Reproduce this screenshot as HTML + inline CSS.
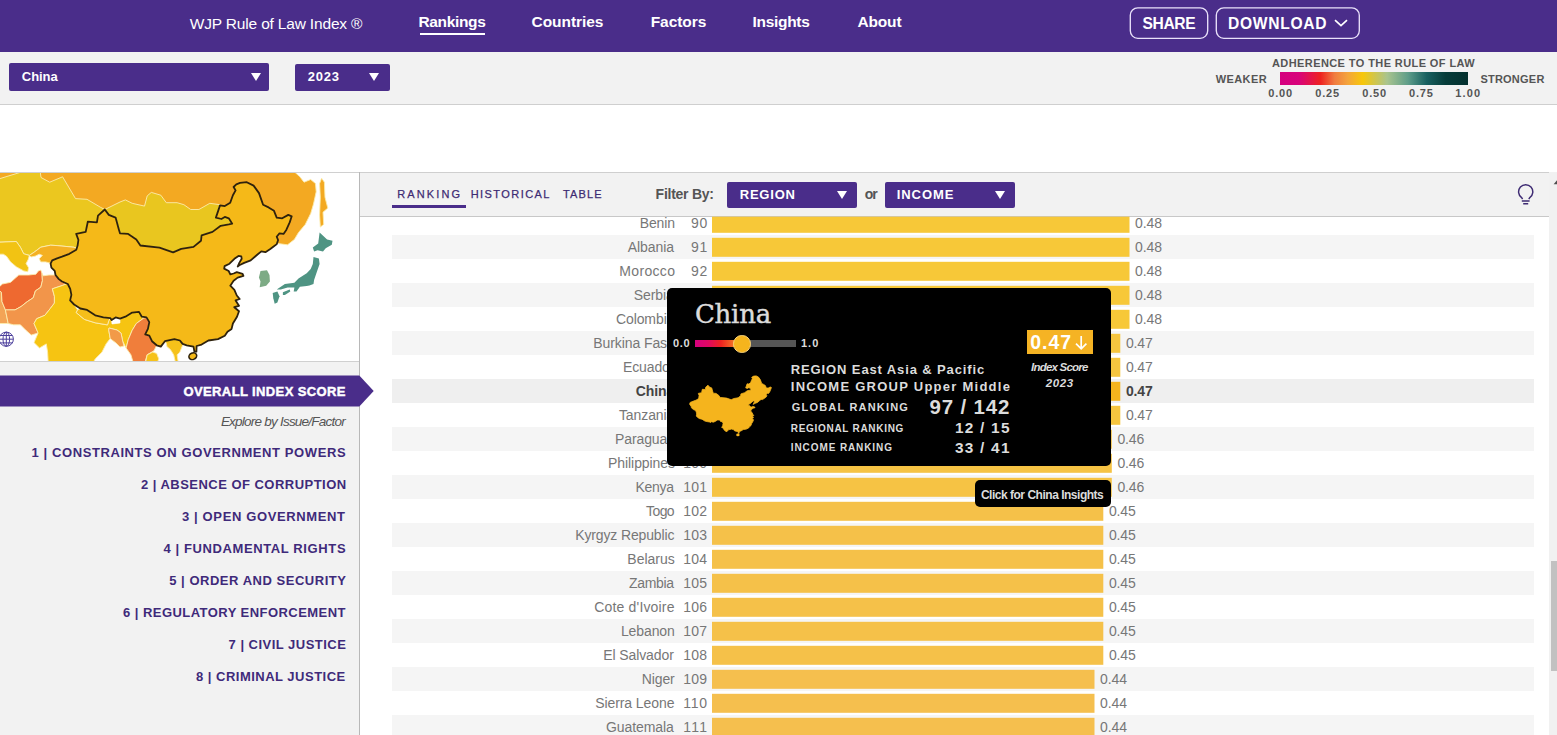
<!DOCTYPE html>
<html lang="en">
<head>
<meta charset="utf-8">
<title>WJP Rule of Law Index</title>
<style>
html,body{margin:0;padding:0;}
body{width:1557px;height:735px;position:relative;overflow:hidden;background:#fff;font-family:'Liberation Sans', sans-serif;}
.t{position:absolute;white-space:pre;line-height:1;}
.med{-webkit-text-stroke:0.25px currentColor;}
.black{-webkit-text-stroke:0.45px currentColor;}
.slab{-webkit-text-stroke:0.45px currentColor;}
.abs{position:absolute;}
#nav{left:0;top:0;width:1557px;height:52px;background:#4a2d8a;}
#sub{left:0;top:52px;width:1557px;height:52px;background:#f2f2f2;border-bottom:1px solid #cfcfcf;}
.btn{border:1px solid #e4dcf5;border-radius:7px;box-sizing:border-box;}
.sel{background:#4a2d8a;border-radius:2px;}
.tri{width:0;height:0;border-left:5.4px solid transparent;border-right:5.4px solid transparent;border-top:8.5px solid #fff;}
#leftpanel{left:0;top:172px;width:359px;height:563px;background:#f2f2f2;border-right:1px solid #b8b8b8;}
#mapbox{left:0;top:172px;width:359px;height:190px;background:#fff;border-top:1px solid #d0d0d0;border-bottom:1px solid #d0d0d0;box-sizing:border-box;}
.map{position:absolute;left:0;top:0px;}
#rhead{left:360px;top:172px;width:1190px;height:45px;background:#f2f2f2;border-top:1px solid #cfcfcf;border-bottom:1px solid #c8c8c8;box-sizing:border-box;}
.stripe{position:absolute;left:392px;width:1142px;height:24px;}
#tip{left:667px;top:287.5px;width:443.5px;height:178.5px;background:#000;border-radius:5px;}
#tip2{left:975px;top:480px;width:135.5px;height:27px;background:#000;border-radius:5px;}
</style>
</head>
<body>
<div id="nav" class="abs"></div>
<div class="abs" style="left:419.5px;top:33px;width:65.5px;height:2px;background:#fff"></div>
<svg class="abs" style="left:0;top:0" width="1557" height="52" viewBox="0 0 1557 52"><g fill="none" stroke="#e9e1fa" stroke-width="1.35"><rect x="1130.3" y="7.8" width="77.4" height="30.5" rx="7.5"/><rect x="1216.3" y="7.8" width="143" height="30.5" rx="7.5"/></g></svg>
<svg class="abs" style="left:1333px;top:17px" width="16" height="12" viewBox="0 0 16 12"><path d="M2 3.2 L8 8.6 L14 3.2" fill="none" stroke="#fff" stroke-width="1.7"/></svg>
<div id="sub" class="abs"></div>
<div class="abs sel" style="left:9px;top:63px;width:260px;height:28px"></div>
<div class="abs tri" style="left:250.8px;top:72.5px"></div>
<div class="abs sel" style="left:295px;top:64px;width:95px;height:27px"></div>
<div class="abs tri" style="left:368.7px;top:72.5px"></div>
<div class="abs" style="left:1280px;top:72px;width:188px;height:13px;background:linear-gradient(90deg,#d5007f 0%,#d8037b 10%,#ee2220 21.5%,#f07c40 29%,#f4a43c 36%,#f7c70a 44%,#a9c48e 57%,#5f9e8a 68%,#186060 78%,#063c3a 88%,#04302e 100%)"></div>

<div id="leftpanel" class="abs"></div>
<div id="mapbox" class="abs">
<svg class="map" width="359" height="188" viewBox="0 173 359 188">
<polygon points="-3.0,170.0 292.4,170.0 299.9,176.8 304.0,182.2 310.7,179.5 315.5,183.6 316.2,191.8 313.5,204.0 310.7,213.5 305.3,224.4 298.5,232.6 294.4,239.4 287.6,244.8 282.2,244.1 277.4,243.5 270.0,235.0 250.0,215.0 225.0,215.0 212.0,212.0 115.0,212.0 104.8,209.5 90.0,206.0 -3.0,200.0" fill="#f3a922" stroke="#fcecae" stroke-width="0.9" stroke-linejoin="round"/>
<polygon points="321.6,178.2 324.4,182.2 325.0,197.2 327.8,208.1 323.0,212.2 323.7,224.4 320.3,227.1 319.6,214.9 320.3,197.2 319.6,183.6" fill="#f3a922" stroke="#fcecae" stroke-width="0.9" stroke-linejoin="round"/>
<polygon points="-3.0,179.5 28.0,170.0 40.0,170.0 41.0,177.5 49.7,182.2 62.6,176.8 75.5,198.6 87.0,199.3 100.7,207.4 104.8,209.5 98.0,215.6 96.9,222.4 87.8,221.7 85.7,231.9 76.2,233.9 78.4,239.9 77.6,245.6 76.3,248.1 73.5,247.2 57.1,245.6 50.6,245.2 40.8,247.2 34.3,252.1 29.4,255.4 23.7,253.8 20.4,247.2 16.3,241.5 -3.0,242.3" fill="#ebc71f" stroke="#fcecae" stroke-width="0.9" stroke-linejoin="round"/>
<polygon points="104.8,209.5 120.0,202.0 125.4,199.9 132.2,203.3 144.5,206.1 147.2,195.9 151.3,192.4 160.8,195.2 166.3,202.7 177.1,202.7 183.9,204.7 190.7,209.5 198.9,209.5 209.8,203.3 220.0,204.7 215.9,217.6 221.4,219.0 224.8,216.9 228.8,218.3 232.2,223.7 228.8,224.4 220.7,225.8 212.5,231.9 201.6,235.3 201.0,240.7 193.5,246.9 181.2,248.9 173.1,252.3 159.5,247.6 140.4,245.5 136.3,239.4 128.2,233.9 120.0,233.3 119.0,229.9 115.6,217.6 108.8,214.9" fill="#e9c61f" stroke="#fcecae" stroke-width="0.9" stroke-linejoin="round"/>
<polygon points="29.4,255.4 34.3,252.1 40.8,247.2 50.6,245.2 57.1,245.6 73.5,247.2 76.3,248.1 76.3,249.7 69.4,253.8 62.0,256.6 57.1,258.3 52.2,260.3 50.2,263.2 45.7,261.9 40.8,261.9 39.2,258.7 42.4,255.4 39.2,254.2 35.1,256.2 31.0,257.0" fill="#f4b022" stroke="#fcecae" stroke-width="0.9" stroke-linejoin="round"/>
<polygon points="-3.0,242.3 16.3,241.5 20.4,247.2 23.7,253.8 29.4,255.4 28.2,259.5 26.1,263.6 28.6,267.7 27.8,271.7 23.7,270.9 16.3,266.8 10.6,261.9 6.5,256.2 3.3,254.2 -3.0,254.2" fill="#f2c313" stroke="#fcecae" stroke-width="0.9" stroke-linejoin="round"/>
<polygon points="-3.0,288.9 1.4,292.2 2.0,301.7 5.4,309.9 8.2,323.5 -3.0,323.5" fill="#f3a456" stroke="#fcecae" stroke-width="0.9" stroke-linejoin="round"/>
<polygon points="-3.0,288.9 2.4,284.0 10.6,282.3 18.8,275.0 28.6,275.0 35.9,274.2 38.4,270.9 40.8,270.1 42.0,273.4 42.4,280.7 40.8,287.2 35.4,290.9 33.3,297.7 27.2,301.7 21.1,306.5 15.0,309.9 5.4,309.9 2.0,301.7 1.4,292.2" fill="#ee6930" stroke="#fcecae" stroke-width="0.9" stroke-linejoin="round"/>
<polygon points="42.0,273.4 43.3,275.8 49.0,275.0 55.5,275.0 58.8,279.1 62.0,281.5 66.1,284.0 62.6,285.4 52.4,288.8 54.4,296.3 54.4,303.1 50.3,308.5 44.9,315.3 36.7,318.7 34.0,323.5 38.1,333.0 31.3,335.1 25.9,330.3 20.4,324.8 13.6,324.8 8.2,323.5 5.4,309.9 15.0,309.9 21.1,306.5 27.2,301.7 33.3,297.7 35.4,290.9 40.8,287.2 42.4,280.7" fill="#f2954a" stroke="#fcecae" stroke-width="0.9" stroke-linejoin="round"/>
<polygon points="52.4,288.8 62.6,285.4 66.1,284.0 67.8,284.0 70.2,288.9 71.4,294.9 70.1,300.4 74.1,304.5 77.6,309.9 76.2,312.6 84.4,319.4 95.2,322.8 107.5,324.9 108.8,320.8 110.2,318.1 111.6,320.1 112.0,324.0 120.0,323.0 120.0,318.7 125.4,316.7 132.2,312.6 139.0,311.9 141.8,316.7 143.8,318.1 136.3,323.5 132.2,330.3 128.2,339.8 126.1,348.0 122.7,341.2 121.0,333.0 117.0,330.0 109.0,328.0 108.8,330.3 110.2,338.5 106.1,343.9 102.0,352.1 95.2,358.9 92.5,364.0 48.3,364.0 47.6,352.1 46.3,343.9 39.5,348.0 34.0,342.6 38.1,333.0 34.0,323.5 36.7,318.7 44.9,315.3 50.3,308.5 54.4,303.1 54.4,296.3" fill="#f6c412" stroke="#fcecae" stroke-width="0.9" stroke-linejoin="round"/>
<polygon points="77.6,309.9 80.3,308.5 87.1,309.9 95.2,315.3 103.4,317.4 110.2,318.1 108.8,320.8 107.5,324.9 95.2,322.8 84.4,319.4 76.2,312.6" fill="#f5be1a" stroke="#fcecae" stroke-width="0.9" stroke-linejoin="round"/>
<polygon points="111.6,320.1 115.6,317.4 120.0,318.7 120.0,323.0 112.0,324.0" fill="#ffffff" stroke="none" stroke-width="0.9" stroke-linejoin="round"/>
<polygon points="109.0,328.0 117.0,330.0 121.0,333.0 122.7,341.2 124.0,346.0 120.0,347.0 116.0,343.0 112.0,340.0 110.2,338.5 108.8,330.3" fill="#f29a48" stroke="#fcecae" stroke-width="0.9" stroke-linejoin="round"/>
<polygon points="136.3,323.5 143.8,318.1 146.5,317.4 149.3,322.1 147.9,328.9 145.2,334.4 149.3,335.7 152.0,341.2 156.7,345.3 154.0,350.7 147.2,354.8 144.5,364.0 133.6,364.0 130.9,354.8 126.1,348.0 128.2,339.8 132.2,330.3" fill="#f07e3b" stroke="#fcecae" stroke-width="0.9" stroke-linejoin="round"/>
<polygon points="147.2,354.8 152.7,352.1 156.7,353.4 158.8,358.9 156.7,364.0 145.2,364.0" fill="#f6c21a" stroke="#fcecae" stroke-width="0.9" stroke-linejoin="round"/>
<polygon points="166.3,343.2 164.9,341.2 174.4,339.1 179.9,340.5 182.6,343.9 182.6,345.3 179.9,352.1 177.1,354.8 178.5,364.0 175.8,364.0 173.7,354.8 170.3,349.4 166.9,346.6" fill="#f6c21a" stroke="#fcecae" stroke-width="0.9" stroke-linejoin="round"/>
<polygon points="260.5,271.0 267.0,270.2 269.5,275.1 269.9,281.6 266.2,285.7 259.7,287.3 260.5,281.6 258.9,277.6" fill="#7dab85" stroke="none" stroke-width="0.9" stroke-linejoin="round"/>
<polygon points="319.6,232.6 327.1,239.4 332.5,240.7 331.8,244.8 325.7,248.2 323.0,251.6 317.6,250.3 314.1,251.6 312.8,247.6 318.2,243.5 318.9,238.0" fill="#4f9483" stroke="none" stroke-width="0.9" stroke-linejoin="round"/>
<polygon points="313.5,257.0 318.9,258.4 319.6,263.9 316.9,271.8 314.1,280.0 313.5,284.0 309.4,285.4 306.7,286.1 299.9,286.8 296.5,291.5 293.7,291.5 294.4,287.4 287.6,287.4 280.8,289.5 276.7,289.5 284.9,284.0 294.4,282.7 298.5,278.6 306.7,273.2 310.7,269.1 312.8,263.9" fill="#4f9483" stroke="none" stroke-width="0.9" stroke-linejoin="round"/>
<polygon points="282.9,292.2 289.7,289.5 290.3,291.5 284.9,294.9 282.9,294.9" fill="#4f9483" stroke="none" stroke-width="0.9" stroke-linejoin="round"/>
<polygon points="272.7,292.9 277.4,291.5 279.5,296.3 277.4,302.4 274.7,303.8 273.3,298.3" fill="#4f9483" stroke="none" stroke-width="0.9" stroke-linejoin="round"/>
<polygon points="104.8,209.5 108.8,214.9 115.6,217.6 119.0,229.9 120.0,233.3 128.2,233.9 136.3,239.4 140.4,245.5 159.5,247.6 173.1,252.3 181.2,248.9 193.5,246.9 201.0,240.7 201.6,235.3 212.5,231.9 220.7,225.8 228.8,224.4 232.2,223.7 228.8,218.3 224.8,216.9 221.4,219.0 215.9,217.6 220.0,205.4 224.8,206.1 230.2,202.7 232.9,195.2 235.6,190.4 233.6,187.0 236.3,184.3 240.0,182.9 246.8,182.2 253.6,185.6 259.0,193.1 263.1,204.7 268.6,207.4 274.0,210.8 276.7,217.6 282.2,218.3 288.3,214.9 291.7,216.3 289.7,222.4 286.3,229.9 283.5,233.9 279.5,233.3 276.7,236.7 278.1,240.0 276.8,244.1 273.6,246.5 270.3,249.0 265.4,252.2 261.3,251.4 257.2,254.7 250.7,260.4 244.2,262.9 239.3,265.3 237.7,266.5 239.3,262.9 241.7,258.8 241.3,256.3 238.5,255.9 234.4,258.8 229.5,263.7 224.6,266.1 224.2,268.6 228.7,271.0 230.3,274.3 233.6,273.5 236.8,272.2 242.6,273.9 243.4,275.9 237.7,277.6 233.6,280.8 230.3,285.7 234.4,289.8 236.8,295.5 239.7,299.0 235.6,300.4 239.0,305.8 234.3,307.2 239.0,311.3 237.0,316.7 232.9,323.5 231.6,328.9 227.5,331.7 224.8,335.7 218.0,339.1 208.4,340.5 201.6,344.6 196.6,346.0 196.4,351.6 194.4,351.6 193.5,346.6 186.7,345.3 182.6,343.9 179.9,340.5 174.4,339.1 164.9,341.2 160.8,346.6 156.7,345.3 152.0,341.2 149.3,335.7 145.2,334.4 147.9,328.9 149.3,322.1 146.5,317.4 141.8,316.7 139.0,311.9 132.2,312.6 125.4,316.7 120.0,318.7 115.6,317.4 111.6,320.1 110.2,318.1 103.4,317.4 95.2,315.3 87.1,309.9 80.3,308.5 74.1,304.5 70.1,300.4 71.4,294.9 70.2,288.9 67.8,284.0 62.0,281.5 58.8,279.1 55.5,275.0 54.7,270.9 51.4,267.7 50.6,263.6 52.2,260.3 57.1,258.3 62.0,256.6 69.4,253.8 76.3,249.7 77.6,245.6 78.4,239.9 76.2,233.9 85.7,231.9 87.8,221.7 96.9,222.4 98.0,215.6" fill="#f5b918" stroke="#2e220d" stroke-width="1.8" stroke-linejoin="round"/>
<ellipse cx="192.8" cy="356.2" rx="4" ry="3.2" fill="#f5b918" stroke="#2e220d" stroke-width="1.6" transform="rotate(-25 192.8 356.2)"/>
<g fill="none" stroke="#4c3f9c" stroke-width="1.0"><circle cx="6.3" cy="339.2" r="7.1" fill="#fff"/><ellipse cx="6.3" cy="339.2" rx="3.3" ry="7.1"/><path d="M6.3 332.1V346.3M-0.8 339.2H13.4M0.3 335.5H12.3M0.3 342.9H12.3"/></g>
</svg>
</div>
<svg class="abs" style="left:0;top:0" width="400" height="420" viewBox="0 0 400 420"><polygon points="-1,375.4 359.3,375.4 373.7,391 359.3,406.6 -1,406.6" fill="#4a2d8a"/></svg>

<div id="rhead" class="abs"></div>
<div class="abs" style="left:392px;top:205px;width:74px;height:3px;background:#4a2d8a"></div>
<div class="abs sel" style="left:727px;top:182px;width:130px;height:26px"></div>
<div class="abs tri" style="left:836.6px;top:190.5px"></div>
<div class="abs sel" style="left:885px;top:182px;width:130px;height:26px"></div>
<div class="abs tri" style="left:994.5px;top:190.5px"></div>
<svg class="abs" style="left:0;top:0" width="1557" height="735" viewBox="0 0 1557 735"><g fill="none" stroke="#3e2b73" stroke-width="1.45" stroke-linecap="butt"><path d="M1522.6 199.2 L1521.6 197.6 A7.1 7.1 0 1 1 1529.8 197.6 L1528.8 199.2"/><path d="M1521.8 200.9H1529.6M1523.2 203.8H1528.2"/></g></svg>

<div class="stripe" style="top:235px;background:#f5f5f5"></div><div class="stripe" style="top:283px;background:#f5f5f5"></div><div class="stripe" style="top:331px;background:#f5f5f5"></div><div class="stripe" style="top:379px;background:#efefef"></div><div class="stripe" style="top:427px;background:#f5f5f5"></div><div class="stripe" style="top:475px;background:#f5f5f5"></div><div class="stripe" style="top:523px;background:#f5f5f5"></div><div class="stripe" style="top:571px;background:#f5f5f5"></div><div class="stripe" style="top:619px;background:#f5f5f5"></div><div class="stripe" style="top:667px;background:#f5f5f5"></div><div class="stripe" style="top:715px;background:#f5f5f5"></div>
<svg class="abs" style="left:0;top:0" width="1557" height="735" viewBox="0 0 1557 735">
<rect x="712" y="216.7" width="417.5" height="16.100000000000023" fill="#f7c838"/><rect x="712" y="237.8" width="417.5" height="19.0" fill="#f7c838"/><rect x="712" y="261.8" width="417.5" height="19.0" fill="#f7c838"/><rect x="712" y="285.8" width="417.5" height="19.0" fill="#f7c838"/><rect x="712" y="309.8" width="417.5" height="19.0" fill="#f7c838"/><rect x="712" y="333.8" width="408.3" height="19.0" fill="#f6c53f"/><rect x="712" y="357.8" width="408.3" height="19.0" fill="#f6c53f"/><rect x="712" y="381.8" width="408.3" height="19.0" fill="#f5b41d"/><rect x="712" y="405.8" width="408.3" height="19.0" fill="#f6c53f"/><rect x="712" y="429.8" width="399.8" height="19.0" fill="#f6c344"/><rect x="712" y="453.8" width="399.8" height="19.0" fill="#f6c344"/><rect x="712" y="477.8" width="399.8" height="19.0" fill="#f6c344"/><rect x="712" y="501.8" width="391.3" height="18.999999999999943" fill="#f5c149"/><rect x="712" y="525.8" width="391.3" height="19.0" fill="#f5c149"/><rect x="712" y="549.8" width="391.3" height="19.0" fill="#f5c149"/><rect x="712" y="573.8" width="391.3" height="19.0" fill="#f5c149"/><rect x="712" y="597.8" width="391.3" height="19.0" fill="#f5c149"/><rect x="712" y="621.8" width="391.3" height="19.0" fill="#f5c149"/><rect x="712" y="645.8" width="391.3" height="19.0" fill="#f5c149"/><rect x="712" y="669.8" width="382.5" height="19.0" fill="#f5bf4e"/><rect x="712" y="693.8" width="382.5" height="19.0" fill="#f5bf4e"/><rect x="712" y="717.8" width="382.5" height="19.0" fill="#f5bf4e"/>
</svg>

<!-- scrollbar -->
<div class="abs" style="left:1549px;top:172px;width:8px;height:563px;background:#f1f1f1"></div>
<div class="abs" style="left:1551px;top:561px;width:6px;height:110px;background:#c1c1c1"></div>
<svg class="abs" style="left:1549px;top:176px" width="8" height="10" viewBox="0 0 8 10"><polygon points="4.6,8.3 8,4.2 8,8.3" fill="#505050"/></svg>

<span class="t" style="left:189.80px;top:15.98px;font-size:15.5px;letter-spacing:-0.177px;color:#fff;">WJP Rule of Law Index ®</span>
<span class="t" style="left:418.50px;top:14.38px;font-size:15.5px;letter-spacing:-0.357px;color:#fff;font-weight:700;">Rankings</span>
<span class="t" style="left:531.50px;top:14.38px;font-size:15.5px;letter-spacing:-0.050px;color:#fff;font-weight:700;">Countries</span>
<span class="t" style="left:650.70px;top:14.38px;font-size:15.5px;letter-spacing:-0.050px;color:#fff;font-weight:700;">Factors</span>
<span class="t" style="left:752.50px;top:14.38px;font-size:15.5px;letter-spacing:-0.300px;color:#fff;font-weight:700;">Insights</span>
<span class="t" style="left:857.40px;top:14.38px;font-size:15.5px;letter-spacing:-0.150px;color:#fff;font-weight:700;">About</span>
<span class="t" style="left:1142.60px;top:16.39px;font-size:15.6px;letter-spacing:-0.400px;color:#fff;font-weight:700;">SHARE</span>
<span class="t" style="left:1228.00px;top:16.39px;font-size:15.6px;letter-spacing:0.714px;color:#fff;font-weight:700;">DOWNLOAD</span>
<span class="t" style="left:21.80px;top:70.30px;font-size:13px;letter-spacing:-0.050px;color:#fff;font-weight:700;">China</span>
<span class="t" style="left:307.80px;top:70.30px;font-size:13px;letter-spacing:0.733px;color:#fff;font-weight:700;">2023</span>
<span class="t" style="left:1272.00px;top:57.79px;font-size:11px;letter-spacing:0.407px;color:#555;font-weight:700;">ADHERENCE TO THE RULE OF LAW</span>
<span class="t" style="left:1215.70px;top:73.89px;font-size:11px;letter-spacing:0.420px;color:#555;font-weight:700;">WEAKER</span>
<span class="t" style="left:1480.40px;top:73.89px;font-size:11px;letter-spacing:0.229px;color:#555;font-weight:700;">STRONGER</span>
<span class="t" style="left:1268.20px;top:87.99px;font-size:11px;letter-spacing:0.867px;color:#555;font-weight:700;">0.00</span>
<span class="t" style="left:1315.20px;top:87.99px;font-size:11px;letter-spacing:0.867px;color:#555;font-weight:700;">0.25</span>
<span class="t" style="left:1362.20px;top:87.99px;font-size:11px;letter-spacing:0.867px;color:#555;font-weight:700;">0.50</span>
<span class="t" style="left:1408.90px;top:87.99px;font-size:11px;letter-spacing:0.867px;color:#555;font-weight:700;">0.75</span>
<span class="t" style="left:1455.20px;top:87.99px;font-size:11px;letter-spacing:1.200px;color:#555;font-weight:700;">1.00</span>
<span class="t med" style="left:397.20px;top:189.19px;font-size:11px;letter-spacing:2.133px;color:#3e2b73;">RANKING</span>
<span class="t med" style="left:470.70px;top:189.19px;font-size:11px;letter-spacing:1.433px;color:#3e2b73;">HISTORICAL</span>
<span class="t med" style="left:563.00px;top:189.19px;font-size:11px;letter-spacing:1.150px;color:#3e2b73;">TABLE</span>
<span class="t" style="left:655.60px;top:187.45px;font-size:14px;letter-spacing:-0.256px;color:#555;font-weight:700;">Filter By:</span>
<span class="t" style="left:739.70px;top:188.30px;font-size:13px;letter-spacing:0.800px;color:#fff;font-weight:700;">REGION</span>
<span class="t" style="left:864.80px;top:187.45px;font-size:14px;letter-spacing:-1.200px;color:#555;font-weight:700;">or</span>
<span class="t" style="left:896.70px;top:188.30px;font-size:13px;letter-spacing:0.940px;color:#fff;font-weight:700;">INCOME</span>
<span class="t black" style="left:183.50px;top:385.30px;font-size:13px;letter-spacing:0.383px;color:#fff;font-weight:700;">OVERALL INDEX SCORE</span>
<span class="t" style="left:220.90px;top:414.87px;font-size:13.5px;letter-spacing:-0.773px;color:#555;font-style:italic;">Explore by Issue/Factor</span>
<span class="t" style="left:31.50px;top:446.30px;font-size:13px;letter-spacing:0.594px;color:#3f2a7a;font-weight:700;">1 | CONSTRAINTS ON GOVERNMENT POWERS</span>
<span class="t" style="left:141.00px;top:478.30px;font-size:13px;letter-spacing:0.471px;color:#3f2a7a;font-weight:700;">2 | ABSENCE OF CORRUPTION</span>
<span class="t" style="left:182.00px;top:510.30px;font-size:13px;letter-spacing:0.628px;color:#3f2a7a;font-weight:700;">3 | OPEN GOVERNMENT</span>
<span class="t" style="left:163.40px;top:542.30px;font-size:13px;letter-spacing:0.614px;color:#3f2a7a;font-weight:700;">4 | FUNDAMENTAL RIGHTS</span>
<span class="t" style="left:169.20px;top:574.30px;font-size:13px;letter-spacing:0.529px;color:#3f2a7a;font-weight:700;">5 | ORDER AND SECURITY</span>
<span class="t" style="left:123.10px;top:606.30px;font-size:13px;letter-spacing:0.448px;color:#3f2a7a;font-weight:700;">6 | REGULATORY ENFORCEMENT</span>
<span class="t" style="left:228.60px;top:638.30px;font-size:13px;letter-spacing:0.481px;color:#3f2a7a;font-weight:700;">7 | CIVIL JUSTICE</span>
<span class="t" style="left:196.00px;top:670.30px;font-size:13px;letter-spacing:0.489px;color:#3f2a7a;font-weight:700;">8 | CRIMINAL JUSTICE</span>
<span class="t rowname" style="left:639.70px;top:215.65px;font-size:14px;letter-spacing:-0.099px;color:#777;">Benin</span>
<span class="t" style="left:690.90px;top:215.65px;font-size:14px;letter-spacing:0.900px;color:#777;">90</span>
<span class="t" style="left:1135.10px;top:215.65px;font-size:14px;letter-spacing:-0.133px;color:#777;">0.48</span>
<span class="t rowname" style="left:627.85px;top:239.65px;font-size:14px;letter-spacing:-0.091px;color:#777;">Albania</span>
<span class="t" style="left:690.90px;top:239.65px;font-size:14px;letter-spacing:0.900px;color:#777;">91</span>
<span class="t" style="left:1135.10px;top:239.65px;font-size:14px;letter-spacing:-0.133px;color:#777;">0.48</span>
<span class="t rowname" style="left:619.30px;top:263.65px;font-size:14px;letter-spacing:0.333px;color:#777;">Morocco</span>
<span class="t" style="left:690.90px;top:263.65px;font-size:14px;letter-spacing:0.900px;color:#777;">92</span>
<span class="t" style="left:1135.10px;top:263.65px;font-size:14px;letter-spacing:-0.133px;color:#777;">0.48</span>
<span class="t rowname" style="left:633.77px;top:287.65px;font-size:14px;letter-spacing:-0.093px;color:#777;">Serbia</span>
<span class="t" style="left:690.90px;top:287.65px;font-size:14px;letter-spacing:0.900px;color:#777;">93</span>
<span class="t" style="left:1135.10px;top:287.65px;font-size:14px;letter-spacing:-0.133px;color:#777;">0.48</span>
<span class="t rowname" style="left:615.98px;top:311.65px;font-size:14px;letter-spacing:-0.097px;color:#777;">Colombia</span>
<span class="t" style="left:690.90px;top:311.65px;font-size:14px;letter-spacing:0.900px;color:#777;">94</span>
<span class="t" style="left:1135.10px;top:311.65px;font-size:14px;letter-spacing:-0.133px;color:#777;">0.48</span>
<span class="t rowname" style="left:593.25px;top:335.65px;font-size:14px;letter-spacing:-0.086px;color:#777;">Burkina Faso</span>
<span class="t" style="left:690.90px;top:335.65px;font-size:14px;letter-spacing:0.900px;color:#777;">95</span>
<span class="t" style="left:1125.90px;top:335.65px;font-size:14px;letter-spacing:-0.133px;color:#777;">0.47</span>
<span class="t rowname" style="left:622.90px;top:359.65px;font-size:14px;letter-spacing:-0.099px;color:#777;">Ecuador</span>
<span class="t" style="left:690.90px;top:359.65px;font-size:14px;letter-spacing:0.900px;color:#777;">96</span>
<span class="t" style="left:1125.90px;top:359.65px;font-size:14px;letter-spacing:-0.133px;color:#777;">0.47</span>
<span class="t rowname" style="left:635.74px;top:383.65px;font-size:14px;letter-spacing:-0.111px;color:#444;font-weight:700;">China</span>
<span class="t" style="left:691.90px;top:383.65px;font-size:14px;letter-spacing:-0.100px;color:#444;font-weight:700;">97</span>
<span class="t" style="left:1125.90px;top:383.65px;font-size:14px;letter-spacing:-0.133px;color:#444;font-weight:700;">0.47</span>
<span class="t rowname" style="left:618.95px;top:407.65px;font-size:14px;letter-spacing:-0.093px;color:#777;">Tanzania</span>
<span class="t" style="left:690.90px;top:407.65px;font-size:14px;letter-spacing:0.900px;color:#777;">98</span>
<span class="t" style="left:1125.90px;top:407.65px;font-size:14px;letter-spacing:-0.133px;color:#777;">0.47</span>
<span class="t rowname" style="left:614.99px;top:431.65px;font-size:14px;letter-spacing:-0.098px;color:#777;">Paraguay</span>
<span class="t" style="left:690.90px;top:431.65px;font-size:14px;letter-spacing:0.900px;color:#777;">99</span>
<span class="t" style="left:1117.40px;top:431.65px;font-size:14px;letter-spacing:-0.133px;color:#777;">0.46</span>
<span class="t rowname" style="left:608.07px;top:455.65px;font-size:14px;letter-spacing:-0.077px;color:#777;">Philippines</span>
<span class="t" style="left:683.15px;top:455.65px;font-size:14px;letter-spacing:0.325px;color:#777;">100</span>
<span class="t" style="left:1117.40px;top:455.65px;font-size:14px;letter-spacing:-0.133px;color:#777;">0.46</span>
<span class="t rowname" style="left:635.60px;top:479.65px;font-size:14px;letter-spacing:-0.325px;color:#777;">Kenya</span>
<span class="t" style="left:683.15px;top:479.65px;font-size:14px;letter-spacing:0.325px;color:#777;">101</span>
<span class="t" style="left:1117.40px;top:479.65px;font-size:14px;letter-spacing:-0.133px;color:#777;">0.46</span>
<span class="t rowname" style="left:646.00px;top:503.65px;font-size:14px;letter-spacing:-0.567px;color:#777;">Togo</span>
<span class="t" style="left:683.15px;top:503.65px;font-size:14px;letter-spacing:0.325px;color:#777;">102</span>
<span class="t" style="left:1108.90px;top:503.65px;font-size:14px;letter-spacing:-0.133px;color:#777;">0.45</span>
<span class="t rowname" style="left:575.30px;top:527.65px;font-size:14px;letter-spacing:-0.143px;color:#777;">Kyrgyz Republic</span>
<span class="t" style="left:683.15px;top:527.65px;font-size:14px;letter-spacing:0.325px;color:#777;">103</span>
<span class="t" style="left:1108.90px;top:527.65px;font-size:14px;letter-spacing:-0.133px;color:#777;">0.45</span>
<span class="t rowname" style="left:627.30px;top:551.65px;font-size:14px;letter-spacing:0.000px;color:#777;">Belarus</span>
<span class="t" style="left:683.15px;top:551.65px;font-size:14px;letter-spacing:0.325px;color:#777;">104</span>
<span class="t" style="left:1108.90px;top:551.65px;font-size:14px;letter-spacing:-0.133px;color:#777;">0.45</span>
<span class="t rowname" style="left:629.00px;top:575.65px;font-size:14px;letter-spacing:-0.340px;color:#777;">Zambia</span>
<span class="t" style="left:683.15px;top:575.65px;font-size:14px;letter-spacing:0.325px;color:#777;">105</span>
<span class="t" style="left:1108.90px;top:575.65px;font-size:14px;letter-spacing:-0.133px;color:#777;">0.45</span>
<span class="t rowname" style="left:594.30px;top:599.65px;font-size:14px;letter-spacing:0.167px;color:#777;">Cote d&#x27;Ivoire</span>
<span class="t" style="left:683.15px;top:599.65px;font-size:14px;letter-spacing:0.325px;color:#777;">106</span>
<span class="t" style="left:1108.90px;top:599.65px;font-size:14px;letter-spacing:-0.133px;color:#777;">0.45</span>
<span class="t rowname" style="left:620.92px;top:623.65px;font-size:14px;letter-spacing:-0.103px;color:#777;">Lebanon</span>
<span class="t" style="left:683.15px;top:623.65px;font-size:14px;letter-spacing:0.325px;color:#777;">107</span>
<span class="t" style="left:1108.90px;top:623.65px;font-size:14px;letter-spacing:-0.133px;color:#777;">0.45</span>
<span class="t rowname" style="left:603.13px;top:647.65px;font-size:14px;letter-spacing:-0.083px;color:#777;">El Salvador</span>
<span class="t" style="left:683.15px;top:647.65px;font-size:14px;letter-spacing:0.325px;color:#777;">108</span>
<span class="t" style="left:1108.90px;top:647.65px;font-size:14px;letter-spacing:-0.133px;color:#777;">0.45</span>
<span class="t rowname" style="left:641.67px;top:671.65px;font-size:14px;letter-spacing:-0.093px;color:#777;">Niger</span>
<span class="t" style="left:683.15px;top:671.65px;font-size:14px;letter-spacing:0.325px;color:#777;">109</span>
<span class="t" style="left:1100.10px;top:671.65px;font-size:14px;letter-spacing:-0.133px;color:#777;">0.44</span>
<span class="t rowname" style="left:595.22px;top:695.65px;font-size:14px;letter-spacing:-0.084px;color:#777;">Sierra Leone</span>
<span class="t" style="left:683.15px;top:695.65px;font-size:14px;letter-spacing:0.825px;color:#777;">110</span>
<span class="t" style="left:1100.10px;top:695.65px;font-size:14px;letter-spacing:-0.133px;color:#777;">0.44</span>
<span class="t rowname" style="left:606.09px;top:719.65px;font-size:14px;letter-spacing:-0.099px;color:#777;">Guatemala</span>
<span class="t" style="left:683.15px;top:719.65px;font-size:14px;letter-spacing:1.325px;color:#777;">111</span>
<span class="t" style="left:1100.10px;top:719.65px;font-size:14px;letter-spacing:-0.133px;color:#777;">0.44</span>

<div id="tip" class="abs"></div>
<div id="tip2" class="abs"></div>
<div class="abs" style="left:695px;top:340px;width:100.5px;height:7px;background:#555"></div>
<div class="abs" style="left:695px;top:340px;width:47px;height:7px;background:linear-gradient(90deg,#d5007f 0%,#df0862 28%,#ee2220 55%,#f26a26 80%,#f58c22 100%)"></div>
<div class="abs" style="left:733.2px;top:335px;width:17.5px;height:17.5px;border-radius:50%;background:#f5b41d;box-sizing:border-box;border:1px solid #f8d27a"></div>
<svg class="abs" style="left:0;top:0" width="1557" height="735" viewBox="0 0 1557 735">
<polygon points="708.0,385.2 709.4,387.0 711.7,387.9 712.9,392.1 713.2,393.2 716.0,393.4 718.7,395.3 720.1,397.4 726.6,398.1 731.2,399.7 733.9,398.5 738.1,397.8 740.7,395.7 740.9,393.9 744.6,392.7 747.3,390.7 750.1,390.2 751.2,390.0 750.1,388.1 748.7,387.7 747.6,388.4 745.7,387.9 747.1,383.8 748.7,384.0 750.6,382.8 751.5,380.3 752.4,378.7 751.7,377.5 752.6,376.6 753.9,376.1 756.2,375.9 758.5,377.1 760.3,379.6 761.7,383.5 763.6,384.4 765.4,385.6 766.3,387.9 768.2,388.1 770.2,387.0 771.4,387.5 770.7,389.5 769.6,392.1 768.6,393.4 767.3,393.2 766.3,394.4 766.8,395.5 766.3,396.9 765.3,397.7 764.1,398.5 762.5,399.6 761.1,399.4 759.7,400.5 757.5,402.4 755.3,403.3 753.6,404.1 753.1,404.5 753.6,403.3 754.4,401.9 754.3,401.0 753.4,400.9 752.0,401.9 750.3,403.5 748.7,404.3 748.5,405.2 750.0,406.0 750.6,407.1 751.7,406.9 752.8,406.4 754.8,407.0 755.0,407.7 753.1,408.2 751.7,409.3 750.6,411.0 752.0,412.4 752.8,414.3 753.8,415.5 752.4,416.0 753.5,417.8 751.9,418.3 753.5,419.7 752.9,421.5 751.5,423.8 751.0,425.6 749.6,426.6 748.7,427.9 746.4,429.1 743.2,429.6 740.9,431.0 739.2,431.4 739.1,433.3 738.4,433.3 738.1,431.6 735.8,431.2 734.4,430.7 733.5,429.6 731.6,429.1 728.4,429.8 727.0,431.6 725.6,431.2 724.0,429.8 723.1,427.9 721.7,427.5 722.7,425.6 723.1,423.3 722.2,421.7 720.6,421.5 719.6,419.9 717.3,420.1 715.0,421.5 713.2,422.2 711.7,421.7 710.3,422.6 709.9,422.0 707.6,421.7 704.8,421.0 702.0,419.2 699.7,418.7 697.6,417.4 696.3,416.0 696.7,414.1 696.3,412.1 695.5,410.4 693.5,409.6 692.4,408.8 691.3,407.4 691.1,406.0 689.9,404.9 689.7,403.5 690.2,402.4 691.9,401.7 693.5,401.1 696.0,400.2 698.4,398.8 698.8,397.4 699.1,395.5 698.3,393.4 701.6,392.7 702.3,389.3 705.4,389.5 705.7,387.2" fill="#f5b41d" stroke="#f5b41d" stroke-width="0.8" stroke-linejoin="round"/>
<ellipse cx="737.9" cy="434.9" rx="1.7" ry="1.4" fill="#f5b41d"/>
</svg>
<div class="abs" style="left:1026.5px;top:330px;width:66px;height:24px;background:#f5b324"></div>
<svg class="abs" style="left:1073px;top:334px" width="16" height="18" viewBox="0 0 16 18"><path d="M8.2 2V14.6M3 9.6L8.2 14.8L13.4 9.6" fill="none" stroke="#fff" stroke-width="1.7"/></svg>
<span class="t tt slab" style="left:694.90px;top:301.30px;font-size:26px;letter-spacing:-0.225px;color:#dcdcdc;font-family:'DejaVu Serif', 'Liberation Serif', serif;">China</span>
<span class="t tt" style="left:673.00px;top:337.79px;font-size:11px;letter-spacing:0.700px;color:#dcdcdc;font-weight:700;">0.0</span>
<span class="t tt" style="left:801.00px;top:337.79px;font-size:11px;letter-spacing:1.000px;color:#dcdcdc;font-weight:700;">1.0</span>
<span class="t tt" style="left:790.80px;top:362.90px;font-size:13px;letter-spacing:0.880px;color:#dcdcdc;font-weight:700;">REGION East Asia &amp; Pacific</span>
<span class="t tt" style="left:790.80px;top:380.10px;font-size:13px;letter-spacing:1.254px;color:#dcdcdc;font-weight:700;">INCOME GROUP Upper Middle</span>
<span class="t tt" style="left:791.80px;top:401.99px;font-size:11px;letter-spacing:1.192px;color:#dcdcdc;font-weight:700;">GLOBAL RANKING</span>
<span class="t tt semi" style="left:929.50px;top:396.55px;font-size:20.5px;letter-spacing:0.843px;color:#dcdcdc;font-weight:700;">97 / 142</span>
<span class="t tt" style="left:790.80px;top:423.74px;font-size:10px;letter-spacing:0.700px;color:#dcdcdc;font-weight:700;">REGIONAL RANKING</span>
<span class="t tt semi" style="left:955.00px;top:420.46px;font-size:15.4px;letter-spacing:1.233px;color:#dcdcdc;font-weight:700;">12 / 15</span>
<span class="t tt" style="left:790.80px;top:442.84px;font-size:10px;letter-spacing:0.900px;color:#dcdcdc;font-weight:700;">INCOME RANKING</span>
<span class="t tt semi" style="left:955.00px;top:439.66px;font-size:15.4px;letter-spacing:1.233px;color:#dcdcdc;font-weight:700;">33 / 41</span>
<span class="t tt" style="left:1030.30px;top:333.39px;font-size:19.5px;letter-spacing:0.967px;color:#fff;font-weight:700;">0.47</span>
<span class="t tt" style="left:1031.00px;top:362.17px;font-size:11.5px;letter-spacing:-0.780px;color:#dcdcdc;font-weight:700;font-style:italic;">Index Score</span>
<span class="t tt" style="left:1045.70px;top:377.77px;font-size:11.5px;letter-spacing:0.600px;color:#dcdcdc;font-weight:700;font-style:italic;">2023</span>
<span class="t tt" style="left:980.90px;top:488.54px;font-size:12px;letter-spacing:-0.483px;color:#dcdcdc;font-weight:700;">Click for China Insights</span>
</body>
</html>
